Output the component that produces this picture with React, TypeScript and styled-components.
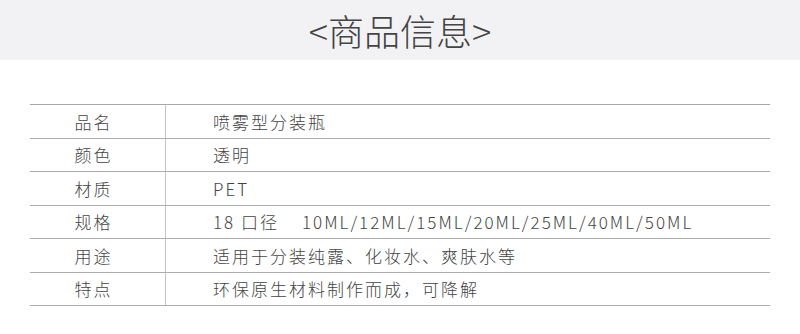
import styled, { createGlobalStyle } from 'styled-components';

const GlobalStyle = createGlobalStyle`
  html, body {
    margin: 0;
    padding: 0;
    background: #ffffff;
  }
  body {
    font-family: "Noto Sans CJK SC", "Noto Sans", sans-serif;
    color: #333333;
  }
`;

const Page = styled.div`
  width: 800px;
  height: 334px;
  overflow: hidden;
  background: #ffffff;
`;

const Header = styled.div`
  height: 60px;
  background: #f2f2f4;
  display: flex;
  justify-content: center;
  align-items: center;
`;

const Title = styled.h1`
  margin: 0;
  font-size: 36px;
  font-weight: 200;
  color: #444444;
  letter-spacing: 0;
  line-height: 1;
`;

const Table = styled.div`
  margin: 44px 30px 0;
  border-top: 1px solid #a9a9a9;
`;

const Row = styled.div`
  display: grid;
  grid-template-columns: 136px 1fr;
  height: 32.5px;
  border-bottom: 1px solid #acacac;
`;

const Label = styled.div`
  display: flex;
  align-items: center;
  justify-content: center;
  padding-right: 8px;
  border-right: 1px solid #c4c4c4;
  font-size: 17px;
  font-weight: 300;
  letter-spacing: 2px;
  color: #444444;
`;

const Value = styled.div`
  display: flex;
  align-items: center;
  padding-left: 47px;
  font-size: 17px;
  font-weight: 300;
  letter-spacing: 2px;
  color: #444444;
  white-space: pre;
`;

const rows: [string, string][] = [
  ['品名', '喷雾型分装瓶'],
  ['颜色', '透明'],
  ['材质', 'PET'],
  ['规格', '18 口径    10ML/12ML/15ML/20ML/25ML/40ML/50ML'],
  ['用途', '适用于分装纯露、化妆水、爽肤水等'],
  ['特点', '环保原生材料制作而成，可降解'],
];

export default function App() {
  return (
    <Page>
      <GlobalStyle />
      <Header>
        <Title>&lt;商品信息&gt;</Title>
      </Header>
      <Table>
        {rows.map(([label, value]) => (
          <Row key={label}>
            <Label>{label}</Label>
            <Value>{value}</Value>
          </Row>
        ))}
      </Table>
    </Page>
  );
}
